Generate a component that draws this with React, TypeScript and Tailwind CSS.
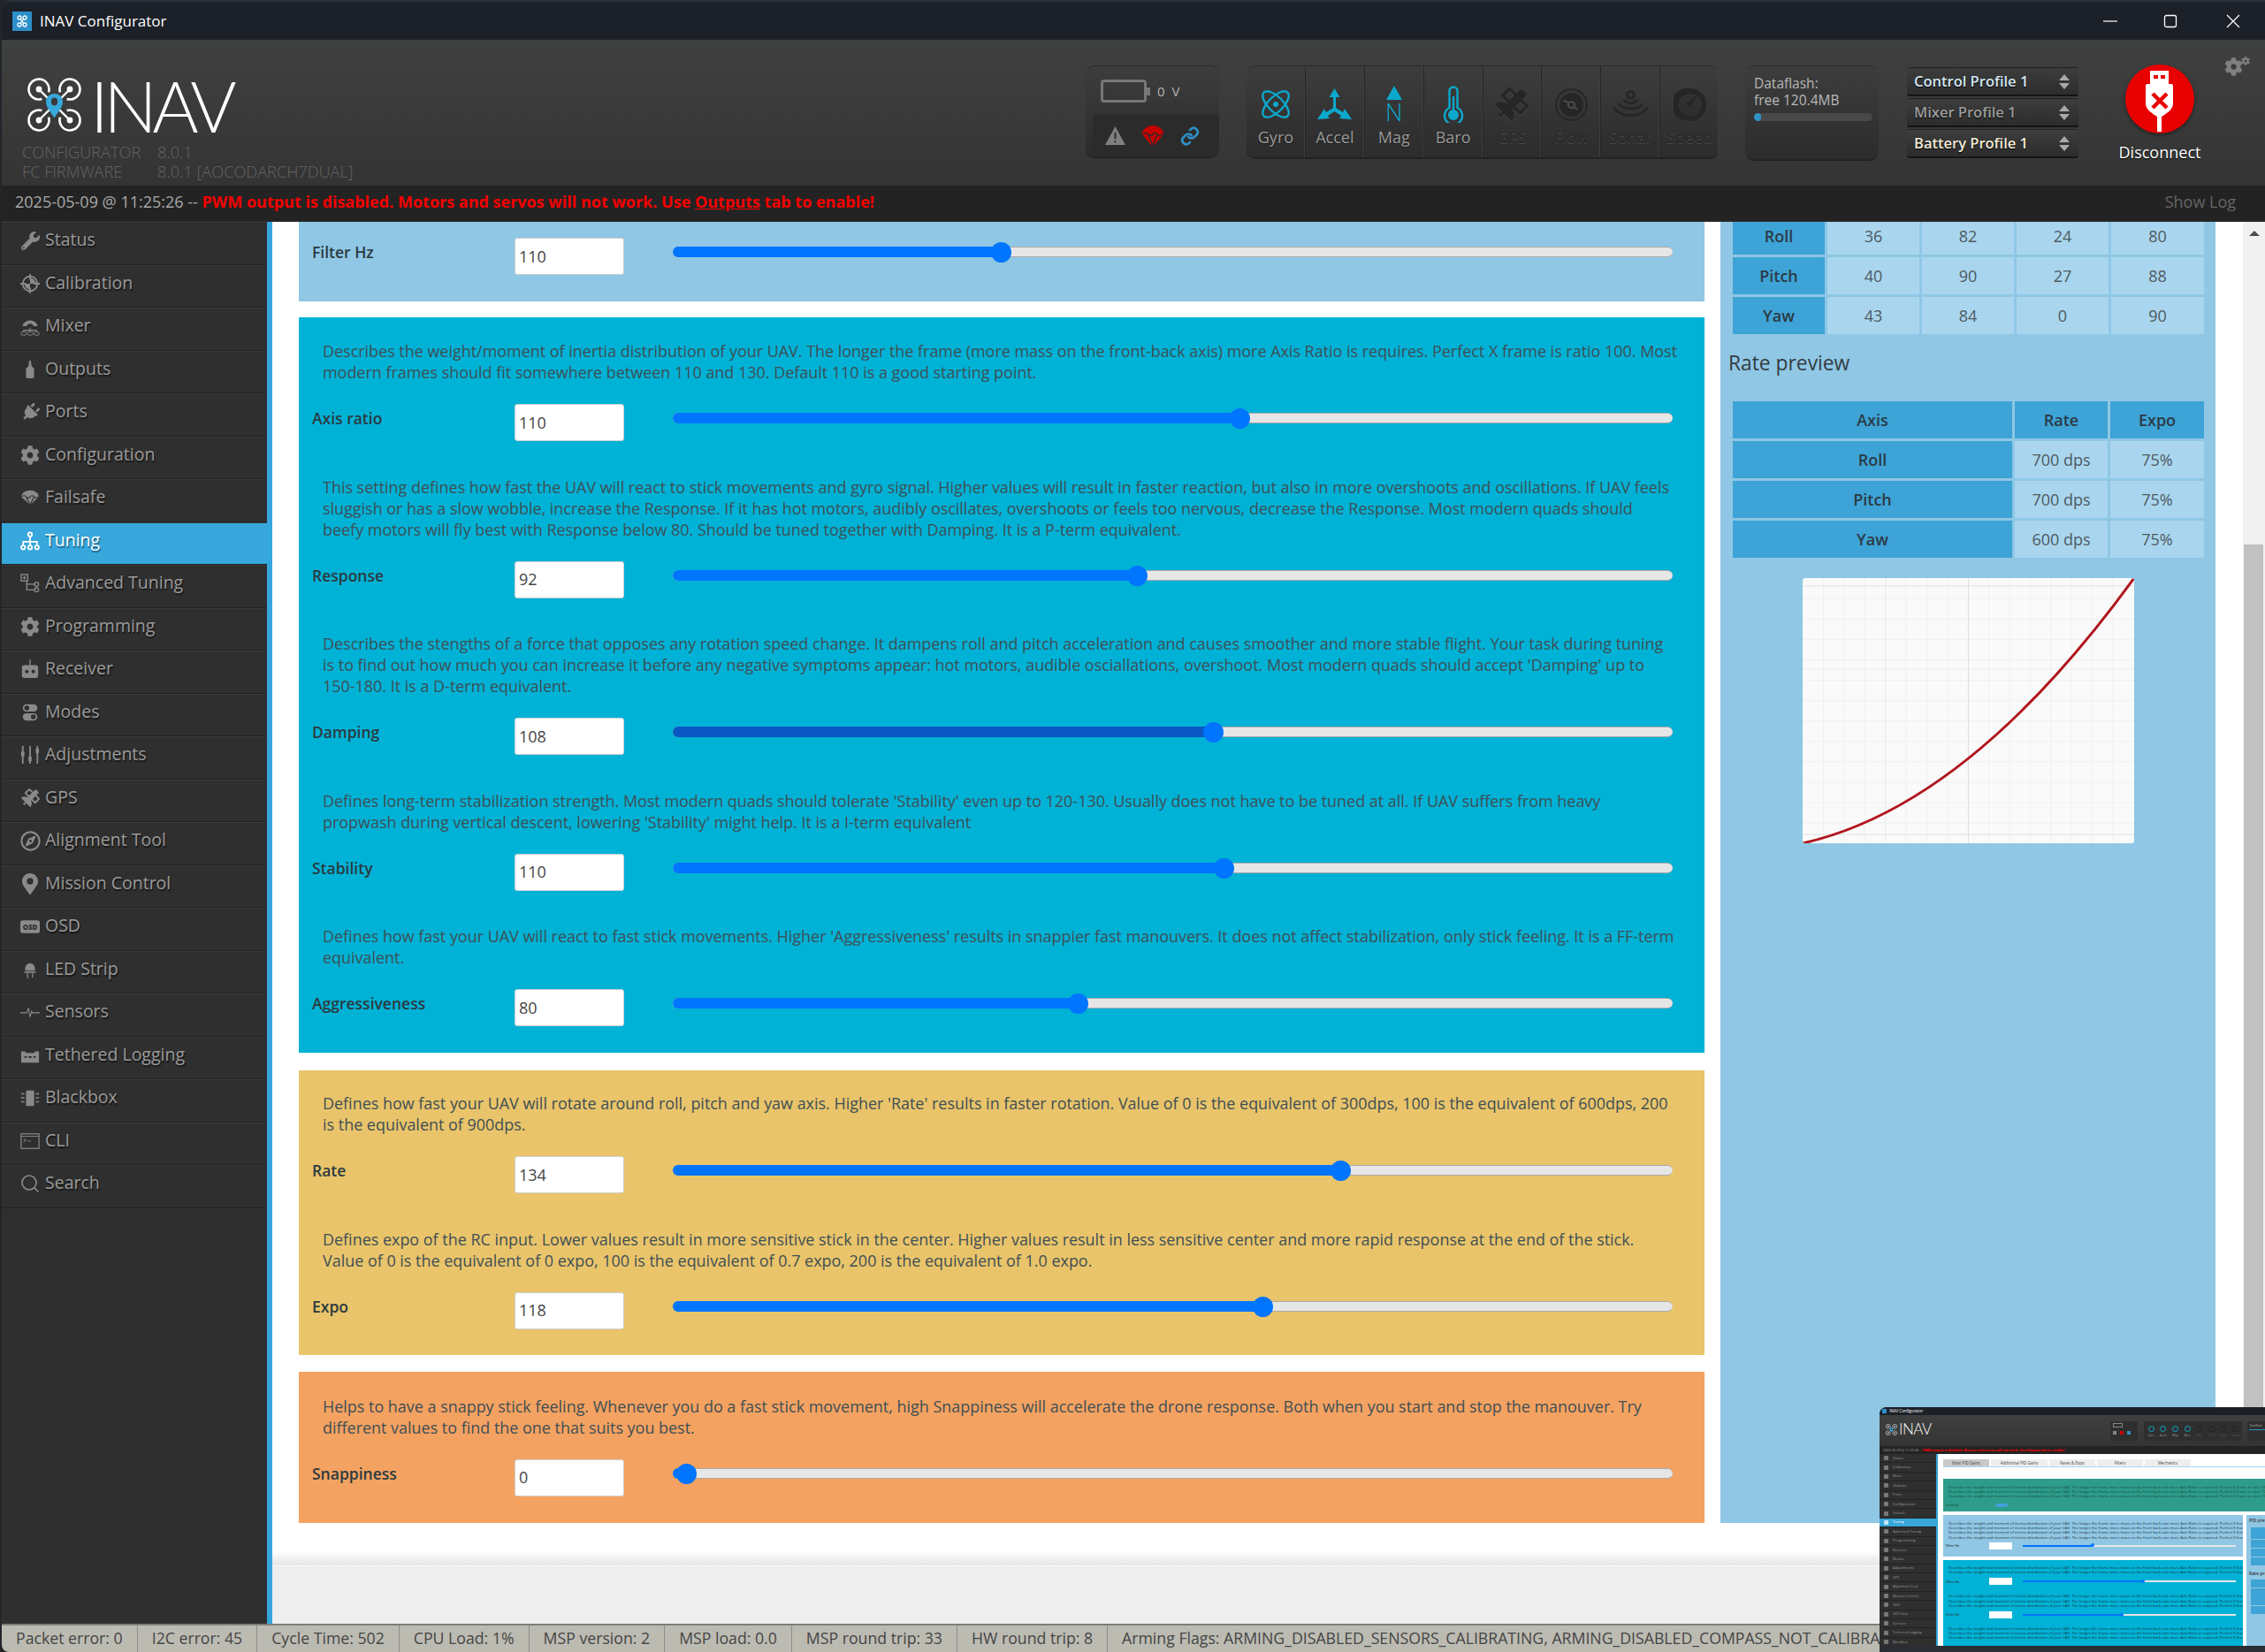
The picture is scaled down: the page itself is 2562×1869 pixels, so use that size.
import type { ReactNode } from "react";
import { FaWrench, FaCog, FaPlug, FaSatellite, FaRegCompass, FaMapMarkerAlt } from "react-icons/fa";
import { Search } from "lucide-react";

const openSans = "font-['Open_Sans','Liberation_Sans',sans-serif]";

function Svg({ children, className = "w-[22px] h-[22px]" }: { children: ReactNode; className?: string }) {
  return (
    <svg viewBox="0 0 24 24" fill="currentColor" className={className}>
      {children}
    </svg>
  );
}

const icons: Record<string, ReactNode> = {
  Status: <FaWrench className="w-[21px] h-[21px]" />,
  Calibration: (
    <Svg>
      <circle cx="12" cy="12" r="9" fill="none" stroke="currentColor" strokeWidth="2" />
      <path d="M12 0v7M12 17v7M0 12h7M17 12h7" stroke="currentColor" strokeWidth="2" />
      <path d="M12 5a7 7 0 0 1 7 7h-7zM12 19a7 7 0 0 1-7-7h7z" />
    </Svg>
  ),
  Mixer: (
    <Svg>
      <path d="M3 12a9 7 0 0 1 18 0h-5a4 3 0 0 0-8 0z" />
      <path d="M12 14v3M4 17h16M4 17v2M12 17v2M20 17v2" stroke="currentColor" strokeWidth="1.2" fill="none" />
      <rect x="1" y="19" width="6" height="4" rx="1" fill="none" stroke="currentColor" />
      <rect x="9" y="19" width="6" height="4" rx="1" fill="none" stroke="currentColor" />
      <rect x="17" y="19" width="6" height="4" rx="1" fill="none" stroke="currentColor" />
    </Svg>
  ),
  Outputs: (
    <Svg>
      <path d="M11 1h2l1 7 3 3v10a2 2 0 0 1-2 2H9a2 2 0 0 1-2-2V11l3-3z" />
    </Svg>
  ),
  Ports: <FaPlug className="w-[21px] h-[21px] rotate-45" />,
  Configuration: <FaCog className="w-[22px] h-[22px]" />,
  Failsafe: (
    <Svg>
      <path d="M1 11a11 8 0 0 1 22 0l-11 10z" />
      <path d="M1 11c3-2 5-2 6 0s4 2 5 0 4-2 5 0 4 1 6 0M7 11l5 10 5-10" stroke="#2f2f2f" strokeWidth="1.2" fill="none" />
    </Svg>
  ),
  Tuning: (
    <Svg>
      <g fill="none" stroke="currentColor" strokeWidth="2">
        <circle cx="12" cy="4" r="2.4" />
        <circle cx="3.5" cy="20" r="2.4" />
        <circle cx="12" cy="20" r="2.4" />
        <circle cx="20.5" cy="20" r="2.4" />
        <path d="M12 6.5v11M3.5 17.5V13h17v4.5" />
      </g>
    </Svg>
  ),
  "Advanced Tuning": (
    <Svg>
      <g fill="none" stroke="currentColor" strokeWidth="1.5">
        <rect x="1" y="1" width="8" height="8" />
        <path d="M3 5h4M5 3v4M8 9v11h10M8 13h10" />
        <circle cx="20" cy="13" r="2.5" />
        <circle cx="20" cy="20" r="2.5" />
      </g>
    </Svg>
  ),
  Programming: <FaCog className="w-[22px] h-[22px]" />,
  Receiver: (
    <Svg>
      <path d="M12 0v7" stroke="currentColor" strokeWidth="1.4" />
      <rect x="2" y="7" width="20" height="16" rx="3" />
      <circle cx="8" cy="15" r="2.3" fill="#2f2f2f" />
      <circle cx="16" cy="15" r="2.3" fill="#2f2f2f" />
    </Svg>
  ),
  Modes: (
    <Svg>
      <rect x="3" y="2" width="18" height="9" rx="4.5" />
      <circle cx="8" cy="6.5" r="3" fill="#2f2f2f" />
      <rect x="3" y="13" width="18" height="9" rx="4.5" />
      <circle cx="16" cy="17.5" r="3" fill="#2f2f2f" />
    </Svg>
  ),
  Adjustments: (
    <Svg>
      <path d="M3 1v22M12 1v22M21 1v22" stroke="currentColor" strokeWidth="2" />
      <rect x="1" y="8" width="4" height="6" rx="1" />
      <rect x="10" y="14" width="4" height="6" rx="1" />
      <rect x="19" y="4" width="4" height="6" rx="1" />
    </Svg>
  ),
  GPS: <FaSatellite className="w-[21px] h-[21px]" />,
  "Alignment Tool": <FaRegCompass className="w-[23px] h-[23px]" />,
  "Mission Control": <FaMapMarkerAlt className="w-[20px] h-[24px]" />,
  OSD: (
    <svg viewBox="0 0 24 16" className="w-[22px] h-[15px]">
      <rect width="24" height="16" rx="3" fill="currentColor" />
      <text x="12" y="11.5" textAnchor="middle" fontSize="8.5" fontWeight="800" fill="#2f2f2f" fontFamily="Open Sans">
        OSD
      </text>
    </svg>
  ),
  "LED Strip": (
    <Svg>
      <path d="M6 11a6 7 0 0 1 12 0v2H6z" />
      <rect x="5" y="14" width="14" height="2" />
      <path d="M9 16v7M15 16v6" stroke="currentColor" strokeWidth="1.4" />
    </Svg>
  ),
  Sensors: (
    <Svg>
      <path d="M0 13h8l2 -6 2 11 2-7 1 2h9" fill="none" stroke="currentColor" strokeWidth="1.2" />
    </Svg>
  ),
  "Tethered Logging": (
    <Svg>
      <path d="M1 7h5l1 2h10l1-2h5v14H1z" />
      <path d="M5 14h3M10 14h4M16 14h3" stroke="#2f2f2f" strokeWidth="2" />
    </Svg>
  ),
  Blackbox: (
    <Svg>
      <rect x="7" y="3" width="10" height="19" rx="1" />
      <path d="M1 7h4M1 12h4M1 17h4M19 7h4M19 12h4M19 17h4" stroke="currentColor" strokeWidth="1.6" />
    </Svg>
  ),
  CLI: (
    <Svg>
      <rect x="1" y="3" width="22" height="18" fill="none" stroke="currentColor" strokeWidth="1.3" />
      <path d="M1 6h22M4 9l3 2-3 2M9 12h4" fill="none" stroke="currentColor" strokeWidth="1" />
    </Svg>
  ),
  Search: <Search className="w-[24px] h-[24px]" strokeWidth={1.6} />,
};

const tabs = [
  "Status",
  "Calibration",
  "Mixer",
  "Outputs",
  "Ports",
  "Configuration",
  "Failsafe",
  "Tuning",
  "Advanced Tuning",
  "Programming",
  "Receiver",
  "Modes",
  "Adjustments",
  "GPS",
  "Alignment Tool",
  "Mission Control",
  "OSD",
  "LED Strip",
  "Sensors",
  "Tethered Logging",
  "Blackbox",
  "CLI",
  "Search",
];

function Logo({ className = "w-[61px] h-[61px]" }: { className?: string }) {
  const rotors = [
    [13, 13, 1, 1],
    [48, 13, -1, 1],
    [13, 48, 1, -1],
    [48, 48, -1, -1],
  ];
  return (
    <svg viewBox="0 0 61 61" className={className}>
      {rotors.map(([x, y, dx, dy]) => (
        <g key={`${x}-${y}`} fill="none" stroke="#fff">
          <path
            d={`M${x + dx * 11} ${y + dy * 3.4}A11.5 11.5 0 1 ${dx * dy > 0 ? 0 : 1} ${x + dx * 3.4} ${y + dy * 11}`}
            strokeWidth="2.6"
          />
          <circle cx={x} cy={y} r="3.4" fill="#fff" stroke="none" />
          <path d={`M${x} ${y}L${x + dx * 14} ${y + dy * 14}`} strokeWidth="2.4" />
        </g>
      ))}
      <path d="M30.5 18c5.5 0 9.5 4 9.5 9.5 0 6-6 12-9.5 18-3.5-6-9.5-12-9.5-18 0-5.5 4-9.5 9.5-9.5z" fill="#37a8db" />
      <ellipse cx="30.5" cy="27" rx="3.6" ry="4.4" fill="#383a39" />
    </svg>
  );
}

function Sensor({ label, on, children }: { label: string; on?: boolean; children: ReactNode }) {
  return (
    <div className="flex-1 flex flex-col items-center border-r border-[#262626] last:border-r-0 shadow-[inset_-1px_0_0_#3e3e3e]">
      <div className={`h-[56px] mt-[15px] flex items-center justify-center ${on ? "text-[#0ba8cc]" : "text-[#262626]"}`}>
        {children}
      </div>
      <span
        className={`text-[18px] leading-[24px] mt-[-3px] ${
          on ? "text-[#9a9a9a] [text-shadow:0_1px_1px_#111]" : "text-[#262626] [text-shadow:0_1px_0_#4d4d4d]"
        }`}
      >
        {label}
      </span>
    </div>
  );
}

function Profile({ label, color }: { label: string; color: string }) {
  return (
    <div className="h-[32px] w-[194px] flex items-center justify-between pl-[8px] pr-[10px] rounded-[3px] bg-linear-to-b from-[#3d3d3d] to-[#2c2c2c] border-b-2 border-[#141414] shadow-[0_-1px_0_#202020]">
      <span className={`text-[16.5px] font-semibold ${color} [text-shadow:0_1px_1px_#000]`}>{label}</span>
      <span className="flex flex-col gap-[3px]">
        <span className="w-0 h-0 border-x-[6px] border-x-transparent border-b-[7px] border-b-[#a9a9a9]" />
        <span className="w-0 h-0 border-x-[6px] border-x-transparent border-t-[7px] border-t-[#a9a9a9]" />
      </span>
    </div>
  );
}

function Header() {
  return (
    <div className="h-[165px] flex bg-linear-to-b from-[#3f4140] to-[#333433] relative">
      <div className="w-[1226px] shrink-0">
        <div className="flex items-center gap-[10px] pl-[29px] pt-[43px]">
          <Logo />
          <span className="text-[80px] leading-[60px] tracking-[-5.5px] font-['Lato','Open_Sans',sans-serif] font-light text-white">
            INAV
          </span>
        </div>
        <div className="pl-[23px] mt-[12px] text-[18.2px] leading-[22px] text-[#646464] font-light">
          <div className="flex">
            <span className="w-[153px]">CONFIGURATOR</span>
            <span>8.0.1</span>
          </div>
          <div className="flex">
            <span className="w-[153px]">FC FIRMWARE</span>
            <span>8.0.1 [AOCODARCH7DUAL]</span>
          </div>
        </div>
      </div>

      <div className="w-[151px] h-[104px] mt-[30px] rounded-[10px] bg-linear-to-b from-[#3d3d3d] to-[#2c2c2c] border-b-2 border-[#232323] shadow-[0_-1px_0_#2a2a2a] overflow-hidden flex flex-col">
        <div className="h-[55px] flex items-center pl-[17px] gap-[12px]">
          <div className="w-[52px] h-[26px] rounded-[4px] border-[3px] border-[#777] relative">
            <span className="absolute right-[-7px] top-[6px] w-[4px] h-[9px] bg-[#777]" />
          </div>
          <span className="text-[15px] tracking-[2px] text-[#b5b5b5] mt-[2px]">0 V</span>
        </div>
        <div className="flex-1 ml-[8px] bg-[#2b2b2b] flex items-center pl-[14px] gap-[19px]">
          <svg viewBox="0 0 24 22" className="w-[23px] h-[21px]">
            <path d="M12 0l12 22H0z" fill="#808080" />
            <path d="M12 7v8M12 17v2" stroke="#2b2b2b" strokeWidth="2" />
          </svg>
          <svg viewBox="0 0 24 24" className="w-[24px] h-[24px]">
            <path d="M0 10a12 10 0 0 1 24 0l-12 14z" fill="#c80000" />
            <path d="M1 10c3-2 4-2 6 0s4 2 5 0 4-2 5 0 4 1 6 0M7 10l5 13 5-13" stroke="#2b2b2b" strokeWidth="1.3" fill="none" />
          </svg>
          <svg viewBox="0 0 24 24" className="w-[22px] h-[22px]" fill="none" stroke="#2f8fc4" strokeWidth="3" strokeLinecap="round">
            <path d="M10 13a5 5 0 0 0 7.5 0l3-3a5 5 0 0 0-7-7L12 4.500" />
            <path d="M14 11a5 5 0 0 0-7.5 0l-3 3a5 5 0 0 0 7 7l1.500-1.500" />
          </svg>
        </div>
      </div>

      <div className="w-[534px] h-[105px] ml-[31px] mt-[30px] flex rounded-[10px] bg-linear-to-b from-[#3d3d3d] to-[#2c2c2c] border-b-2 border-[#232323] shadow-[0_-1px_0_#2a2a2a] overflow-hidden">
        <Sensor label="Gyro" on>
          <svg viewBox="0 0 36 36" className="w-[36px] h-[36px]" fill="none" stroke="currentColor" strokeWidth="2.4">
            <ellipse cx="18" cy="18" rx="8.5" ry="19" transform="rotate(45 18 18)" />
            <ellipse cx="18" cy="18" rx="8.5" ry="19" transform="rotate(-45 18 18)" />
            <circle cx="18" cy="18" r="3" fill="currentColor" stroke="none" />
          </svg>
        </Sensor>
        <Sensor label="Accel" on>
          <svg viewBox="0 0 40 36" className="w-[41px] h-[36px]" fill="currentColor">
            <path d="M20 0l6 10h-4.5v12l8 5 2-4 8 12-14-1 2-3-7.5-5-7.5 5 2 3-14 1 8-12 2 4 8-5V10H14z" />
          </svg>
        </Sensor>
        <Sensor label="Mag" on>
          <div className="flex flex-col items-center">
            <span className="w-0 h-0 border-x-[9px] border-x-transparent border-b-[16px] border-b-current" />
            <span className="text-[27px] leading-[26px] mt-[1px] font-light">N</span>
          </div>
        </Sensor>
        <Sensor label="Baro" on>
          <svg viewBox="0 0 24 42" className="w-[24px] h-[42px]" fill="none" stroke="currentColor" strokeWidth="2.4">
            <path d="M7.5 25V6a4.500 4.500 0 0 1 9 0v19a10 10 0 1 1-9 0z" />
            <circle cx="12" cy="33" r="6" fill="currentColor" stroke="none" />
            <path d="M12 12v18" />
          </svg>
        </Sensor>
        <Sensor label="GPS">
          <FaSatellite className="w-[38px] h-[38px] [filter:drop-shadow(0_1px_0_#4a4a4a)]" />
        </Sensor>
        <Sensor label="Flow">
          <svg viewBox="0 0 36 36" className="w-[37px] h-[37px]" fill="none" stroke="currentColor" strokeWidth="2">
            <circle cx="18" cy="18" r="17" />
            <circle cx="18" cy="18" r="12" fill="currentColor" />
            <circle cx="18" cy="18" r="3.5" stroke="#4a4a4a" />
            <path d="M9 13l6 3M21 21l4 2" stroke="#4a4a4a" />
          </svg>
        </Sensor>
        <Sensor label="Sonar">
          <svg viewBox="0 0 44 36" className="w-[43px] h-[36px]" fill="none" stroke="currentColor" strokeWidth="3">
            <circle cx="22" cy="7" r="4" />
            <path d="M14 13c3 5 13 5 16 0M8 17c5 8 23 8 28 0M2 21c7 13 33 13 40 0" />
          </svg>
        </Sensor>
        <Sensor label="Speed">
          <svg viewBox="0 0 36 36" className="w-[37px] h-[37px]" fill="currentColor">
            <path d="M18 0a18 18 0 1 1-8 34l2-6a12 12 0 1 0 6-22 12 12 0 0 0-5 23l-3 6A18 18 0 0 1 18 0z" />
            <path d="M28 6L18 20l-4-3z" />
            <circle cx="18" cy="18" r="11" fillOpacity="0.4" />
          </svg>
        </Sensor>
      </div>

      <div className="w-[151px] h-[107px] ml-[30px] mt-[30px] pl-[10px] pr-[7px] pt-[10px] rounded-[10px] bg-linear-to-b from-[#3d3d3d] to-[#2c2c2c] border-b-2 border-[#232323] shadow-[0_-1px_0_#2a2a2a]">
        <div className="text-[15.5px] leading-[19px] text-[#b8b8b8]">Dataflash:</div>
        <div className="text-[15.5px] leading-[19px] text-[#b8b8b8]">free 120.4MB</div>
        <div className="mt-[5px] h-[9px] rounded-full bg-[#484848] overflow-hidden">
          <div className="w-[8px] h-[9px] rounded-full bg-[#2d93c9]" />
        </div>
      </div>

      <div className="ml-[32px] mt-[32px] flex flex-col gap-[3px]">
        <Profile label="Control Profile 1" color="text-[#d5e8f5]" />
        <Profile label="Mixer Profile 1" color="text-[#9d9d9d]" />
        <Profile label="Battery Profile 1" color="text-[#f2ecd8]" />
      </div>

      <div className="ml-[42px] mt-[28px] w-[100px] flex flex-col items-center">
        <svg viewBox="0 0 78 78" className="w-[78px] h-[78px] drop-shadow-[0_2px_2px_#222]">
          <circle cx="39" cy="39" r="39" fill="#e80000" />
          <path d="M28 7h21v15h3a2 2 0 0 1 2 2v20c0 7-7 11-13 15v17h-5V59c-6-4-13-8-13-15V24a2 2 0 0 1 2-2h3z" fill="#fff" />
          <path d="M32 12h5v4h-5zM40 12h5v4h-5z" fill="#e80000" />
          <path d="M31 33l16 16M47 33L31 49" stroke="#e80000" strokeWidth="4.5" />
        </svg>
        <span className="text-[18px] leading-[24px] mt-[9px] text-white [text-shadow:0_1px_1px_#000]">Disconnect</span>
      </div>
      <FaCog className="absolute right-[25px] top-[20px] w-[21px] h-[21px] text-[#808080]" />
      <FaCog className="absolute right-[17px] top-[19px] w-[10px] h-[10px] text-[#808080]" />
    </div>
  );
}

function Slider({ at, dark }: { at: number; dark?: boolean }) {
  return (
    <div className="relative h-[12px] w-[1131px] mb-[10px] rounded-full bg-[#e6e6e6] border-y border-[#a9a9a9] flex">
      <div className={`h-[12px] -my-px rounded-l-full ${dark ? "bg-[#0a58c4]" : "bg-[#0075ff]"}`} style={{ width: at }} />
      <div className="absolute top-[-6px] w-[23px] h-[23px] rounded-full bg-[#0075ff]" style={{ left: at - 11 }} />
    </div>
  );
}

function Row({ label, value, at, dark }: { label: string; value: string; at: number; dark?: boolean }) {
  return (
    <div className="flex items-center h-[42px] pl-[15px]">
      <span className="w-[229px] text-[17.5px] font-semibold text-[#2b3a40] mb-[10px] leading-[24px]">{label}</span>
      <div className="w-[124px] h-[42px] rounded-[3px] bg-white border border-[#cfcfcf] flex items-center pl-[4px] text-[18px] text-[#444]">
        {value}
      </div>
      <div className="ml-[55px]">
        <Slider at={at} dark={dark} />
      </div>
    </div>
  );
}

function Desc({ lines }: { lines: string[] }) {
  return (
    <div className="pl-[27px] mb-[24px] text-[17.96px] leading-[24px] text-[#3f4f55]">
      {lines.map((l) => (
        <div key={l} className="whitespace-nowrap">
          {l}
        </div>
      ))}
    </div>
  );
}

function Cell({ children, head, className = "" }: { children: ReactNode; head?: boolean; className?: string }) {
  return (
    <div
      className={`flex items-center justify-center h-[42px] text-[18px] ${
        head ? "bg-[#3ea3d6] font-semibold text-[#2b3a45]" : "bg-[#a9d6ee] text-[#4d5a62]"
      } ${className}`}
    >
      {children}
    </div>
  );
}

function Chart() {
  const minorX = Array.from({ length: 15 }, (_, i) => (i + 1) * 23.4);
  const minorY = Array.from({ length: 12 }, (_, i) => (i + 1) * 23.1);
  return (
    <svg viewBox="0 0 375 300" className="w-[375px] h-[300px] rounded-[3px] bg-[#fafafa]">
      {minorX.map((x) => (
        <path key={x} d={`M${x} 0V300`} stroke="#f0f0f0" />
      ))}
      {minorY.map((y) => (
        <path key={y} d={`M0 ${y}H375`} stroke="#f0f0f0" />
      ))}
      <path d="M94 0V300M0 103H375" stroke="#ececec" />
      <path d="M0 9H375M0 290H375M187.5 0V300" stroke="#e0e0e0" />
      <path d="M0 300Q187.5 258 375 0" fill="none" stroke="#b0161d" strokeWidth="3" />
    </svg>
  );
}

function MiniLines({ n, className = "" }: { n: number; className?: string }) {
  const t =
    "Describes the weight and moment of inertia distribution of your UAV. The longer the frame more mass on the front back axis more Axis Ratio is required. Perfect X frame is ratio 100. Most modern frames should fit somewhere between 110 and 130 and a good starting point is 110 for all quads flying today";
  return (
    <div className={`pl-[6px] text-[4.3px] leading-[5.2px] text-[#1f3036] ${className}`}>
      {Array.from({ length: n }, (_, i) => (
        <div key={i} className="whitespace-nowrap overflow-hidden">
          {t}
        </div>
      ))}
    </div>
  );
}

function MiniSlider({ w }: { w: number }) {
  return (
    <div className="flex items-center h-[10px] pl-[3px]">
      <span className="w-[49px] text-[3.8px] text-[#2b3a40] font-semibold">Filter Hz</span>
      <span className="w-[26px] h-[8px] bg-white" />
      <div className="ml-[12px] w-[241px] h-[2px] bg-[#e6e6e6] relative">
        <div className="h-[2px] bg-[#0075ff]" style={{ width: w }} />
        <div className="absolute top-[-1.5px] w-[4px] h-[4px] rounded-full bg-[#0075ff]" style={{ left: w - 2 }} />
      </div>
    </div>
  );
}

function Mini() {
  return (
    <div className="absolute right-0 bottom-0 w-[436px] h-[277px] rounded-tl-[8px] overflow-hidden bg-[#2a2e33] flex flex-col">
      <div className="h-[9px] bg-[#1c2027] flex items-center pl-[3px] text-[4.5px] text-white">
        <span className="w-[5px] h-[5px] bg-[#2d8fc9] mr-[3px]" />
        INAV Configurator
      </div>
      <div className="h-[35px] bg-linear-to-b from-[#3f4140] to-[#333433] flex items-start">
        <div className="w-[261px] shrink-0 pl-[7px] pt-[9px] flex items-center gap-[2px]">
          <Logo className="w-[13px] h-[13px]" />
          <span className="text-[17px] leading-[14px] tracking-[-0.5px] font-light font-['Lato',sans-serif] text-white">INAV</span>
        </div>
        <div className="w-[32px] h-[22px] mt-[7px] rounded-[2px] bg-[#2f2f2f] flex flex-col px-[3px] pt-[2px]">
          <span className="w-[11px] h-[5px] border border-[#888]" />
          <span className="flex gap-[4px] mt-[4px]">
            <span className="w-[4px] h-[4px] bg-[#888]" />
            <span className="w-[4px] h-[4px] bg-[#c80000]" />
            <span className="w-[4px] h-[4px] bg-[#2f8fc4]" />
          </span>
        </div>
        <div className="w-[114px] h-[22px] ml-[7px] mt-[7px] rounded-[2px] bg-[#2f2f2f] grid grid-cols-8 justify-items-center items-center px-[1px]">
          {["Gyro", "Accel", "Mag", "Baro", "GPS", "Flow", "Sonar", "Speed"].map((s, i) => (
            <div key={s} className="flex flex-col items-center gap-[2px]">
              <span className={`w-[7px] h-[7px] rounded-full border ${i < 4 ? "border-[#0ba8cc]" : "border-[#222]"}`} />
              <span className={`text-[3.2px] leading-[4px] ${i < 4 ? "text-[#999]" : "text-[#555]"}`}>{s}</span>
            </div>
          ))}
        </div>
        <div className="w-[20px] h-[22px] ml-[6px] mt-[7px] rounded-l-[2px] bg-[#2f2f2f] pl-[2px] pt-[3px] text-[3.2px] leading-[4px] text-[#aaa]">
          <div>Dataflash</div>
          <div className="mt-[2px] h-[1px] bg-[#2d93c9]" />
        </div>
      </div>
      <div className="h-[9px] bg-[#232323] flex items-center pl-[4px] text-[3.8px] whitespace-nowrap">
        <span className="text-[#aaa]">2025-05-09 @ 11:25:26 --&nbsp;</span>
        <span className="text-[#f00] font-bold">PWM output is disabled. Motors and servos will not work. Use Outputs tab to enable!</span>
      </div>
      <div className="h-[217px] flex">
        <div className="w-[64px] bg-[#2f2f2f] border-r-2 border-[#35a7dc] shrink-0 box-content overflow-hidden">
          {tabs.map((t) => (
            <div
              key={t}
              className={`h-[10.4px] pl-[5px] flex items-center text-[4px] border-b border-[#222] ${
                t === "Tuning" ? "bg-[#37a7dc] text-white" : "text-[#999]"
              }`}
            >
              <span className="w-[5px] h-[5px] mr-[5px] rounded-[1px] bg-current opacity-70" />
              {t}
            </div>
          ))}
        </div>
        <div className="flex-1 bg-white overflow-hidden pl-[6px]">
          <div className="flex gap-[2px] mt-[6px] w-[400px] border-b border-[#a9d6ee] text-[4.5px] text-[#444]">
            <span className="w-[52px] h-[8px] bg-[#c9c9c9] flex items-center justify-center">Main PID Gains</span>
            <span className="w-[64px] h-[8px] bg-[#eee] flex items-center justify-center">Additional PID Gains</span>
            <span className="w-[52px] h-[8px] bg-[#eee] flex items-center justify-center">Rates & Expo</span>
            <span className="w-[52px] h-[8px] bg-[#eee] flex items-center justify-center">Filters</span>
            <span className="w-[52px] h-[8px] bg-[#eee] flex items-center justify-center">Mechanics</span>
          </div>
          <div className="h-[37px] mt-[13px] w-[400px] bg-[#2d9c8a] pt-[7px]">
            <MiniLines n={3} className="text-[#17483f]" />
            <div className="flex items-center h-[9px] pl-[3px] mt-[3px] text-[3.8px] text-[#17483f]">
              <span className="w-[56px]">Enabled</span>
              <span className="w-[14px] h-[4px] rounded-full bg-[#3ea3d6]" />
            </div>
          </div>
          <div className="flex gap-[4px] mt-[4px] w-[400px]">
            <div className="w-[339px] shrink-0">
              <div className="h-[47px] bg-[#8fc7e5] pt-[7px] overflow-hidden">
                <MiniLines n={4} />
                <div className="mt-[2px]">
                  <MiniSlider w={79} />
                </div>
              </div>
              <div className="h-[100px] mt-[4px] bg-[#00b2d6] pt-[6px] overflow-hidden">
                <MiniLines n={2} />
                <div className="mt-[3px]">
                  <MiniSlider w={136} />
                </div>
                <MiniLines n={3} className="mt-[9px]" />
                <div className="mt-[3px]">
                  <MiniSlider w={112} />
                </div>
                <MiniLines n={3} className="mt-[8px]" />
              </div>
            </div>
            <div className="flex-1 bg-[#8fc7e5] pl-[3px] pt-[3px]">
              <div className="text-[5px] font-semibold text-[#333]">PID preview</div>
              <div className="mt-[3px] ml-[2px] h-[13px] bg-[#3ea3d6]" />
              <div className="mt-[1px] ml-[2px] h-[9px] bg-[#3ea3d6]" />
              <div className="mt-[1px] ml-[2px] h-[9px] bg-[#3ea3d6]" />
              <div className="mt-[1px] ml-[2px] h-[9px] bg-[#3ea3d6]" />
              <div className="mt-[6px] text-[5px] font-semibold text-[#333]">Rate preview</div>
              <div className="mt-[3px] ml-[2px] h-[9px] bg-[#3ea3d6]" />
              <div className="mt-[1px] ml-[2px] h-[19px] bg-[#3ea3d6]" />
              <div className="mt-[1px] ml-[2px] h-[9px] bg-[#3ea3d6]" />
            </div>
          </div>
        </div>
      </div>
    </div>
  );
}

const status = [
  "Packet error: 0",
  "I2C error: 45",
  "Cycle Time: 502",
  "CPU Load: 1%",
  "MSP version: 2",
  "MSP load: 0.0",
  "MSP round trip: 33",
  "HW round trip: 8",
  "Arming Flags: ARMING_DISABLED_SENSORS_CALIBRATING, ARMING_DISABLED_COMPASS_NOT_CALIBRATED",
];

export default function App() {
  return (
    <div className={`relative w-[2562px] h-[1869px] overflow-hidden bg-[#22262b] pl-[2px] flex flex-col ${openSans}`}>
      {/* title bar */}
      <div className="h-[45px] shrink-0 rounded-tl-[10px] bg-[#1c2028] border-t-2 border-[#2b3038] flex items-center pl-[12px] text-white">
        <span className="w-[22px] h-[22px] bg-[#2d8fc9] flex items-center justify-center">
          <svg viewBox="0 0 16 16" className="w-[16px] h-[16px]" fill="none" stroke="#fff" strokeWidth="1.3">
            <circle cx="5" cy="4" r="2" />
            <circle cx="11" cy="4" r="2" />
            <circle cx="5" cy="12" r="2" />
            <circle cx="11" cy="12" r="2" />
            <path d="M6 5l4 6M10 5l-4 6" />
          </svg>
        </span>
        <span className="ml-[9px] text-[17px]">INAV Configurator</span>
        <div className="ml-auto flex items-center text-white">
          <svg viewBox="0 0 16 16" className="w-[16px] h-[16px] mr-[52px]" stroke="#fff" strokeWidth="1.2">
            <path d="M0 8H16" />
          </svg>
          <svg viewBox="0 0 16 16" className="w-[16px] h-[16px] mr-[55px]" fill="none" stroke="#fff" strokeWidth="1.3">
            <rect x="1.5" y="1.5" width="13" height="13" rx="2" />
          </svg>
          <svg viewBox="0 0 16 16" className="w-[16px] h-[16px] mr-[28px]" stroke="#fff" strokeWidth="1.2">
            <path d="M1 1L15 15M15 1L1 15" />
          </svg>
        </div>
      </div>

      <Header />

      {/* log line */}
      <div className="h-[41px] shrink-0 bg-[#232323] flex items-center justify-between pl-[15px] pr-[33px] pb-[3px] text-[18px] border-b border-[#2e2e2e]">
        <div className="whitespace-nowrap">
          <span className="text-[#a8a8a8]">2025-05-09 @ 11:25:26 -- </span>
          <span className="text-[#f40000] font-bold">
            PWM output is disabled. Motors and servos will not work. Use <u>Outputs</u> tab to enable!
          </span>
        </div>
        <span className="text-[#666]">Show Log</span>
      </div>

      <div className="h-[1586px] shrink-0 flex">
        {/* tabs */}
        <nav className="w-[306px] shrink-0 bg-[#2f2f2f] border-r-[6px] border-[#35a7dc]">
          {tabs.map((t) => (
            <div
              key={t}
              className={`h-[48.5px] pl-[17px] flex border-b border-[#222] shadow-[inset_0_1px_0_#3a3a3a] ${
                t === "Tuning" ? "bg-[#37a7dc] text-white" : "text-[#8a8a8a]"
              }`}
            >
              <span className="w-[30px] h-[42px] flex items-center justify-center shrink-0">{icons[t]}</span>
              <span
                className={`ml-[2px] text-[19.5px] leading-[40px] ${
                  t === "Tuning" ? "[text-shadow:1px_2px_1px_#1d5e80]" : "text-[#9a9a9a] [text-shadow:1px_2px_1px_#161616]"
                }`}
              >
                {t}
              </span>
            </div>
          ))}
        </nav>

        <div className="flex-1 flex flex-col min-w-0">
          <div className="relative h-[1520px] shrink-0 bg-white flex overflow-hidden">
            <div className="w-[2229px] shrink-0 pl-[30px] flex gap-[18px]">
              <div className="w-[1590px] shrink-0">
                <div className="bg-[#8fc7e5] pt-[18px] pb-[30px]">
                  <Row label="Filter Hz" value="110" at={371} />
                </div>
                <div className="mt-[18px] bg-[#00b2d6] pt-[26px] pb-[30px]">
                  <Desc
                    lines={[
                      "Describes the weight/moment of inertia distribution of your UAV. The longer the frame (more mass on the front-back axis) more Axis Ratio is requires. Perfect X frame is ratio 100. Most",
                      "modern frames should fit somewhere between 110 and 130. Default 110 is a good starting point.",
                    ]}
                  />
                  <Row label="Axis ratio" value="110" at={641} />
                  <div className="h-[39.5px]" />
                  <Desc
                    lines={[
                      "This setting defines how fast the UAV will react to stick movements and gyro signal. Higher values will result in faster reaction, but also in more overshoots and oscillations. If UAV feels",
                      "sluggish or has a slow wobble, increase the Response. If it has hot motors, audibly oscillates, overshoots or feels too nervous, decrease the Response. Most modern quads should",
                      "beefy motors will fly best with Response below 80. Should be tuned together with Damping. It is a P-term equivalent.",
                    ]}
                  />
                  <Row label="Response" value="92" at={525} />
                  <div className="h-[39.5px]" />
                  <Desc
                    lines={[
                      "Describes the stengths of a force that opposes any rotation speed change. It dampens roll and pitch acceleration and causes smoother and more stable flight. Your task during tuning",
                      "is to find out how much you can increase it before any negative symptoms appear: hot motors, audible osciallations, overshoot. Most modern quads should accept 'Damping' up to",
                      "150-180. It is a D-term equivalent.",
                    ]}
                  />
                  <Row label="Damping" value="108" at={611} dark />
                  <div className="h-[39.5px]" />
                  <Desc
                    lines={[
                      "Defines long-term stabilization strength. Most modern quads should tolerate 'Stability' even up to 120-130. Usually does not have to be tuned at all. If UAV suffers from heavy",
                      "propwash during vertical descent, lowering 'Stability' might help. It is a I-term equivalent",
                    ]}
                  />
                  <Row label="Stability" value="110" at={623} />
                  <div className="h-[39.5px]" />
                  <Desc
                    lines={[
                      "Defines how fast your UAV will react to fast stick movements. Higher 'Aggressiveness' results in snappier fast manouvers. It does not affect stabilization, only stick feeling. It is a FF-term",
                      "equivalent.",
                    ]}
                  />
                  <Row label="Aggressiveness" value="80" at={458} />
                </div>
                <div className="mt-[20px] bg-[#e9c46a] pt-[25px] pb-[29px]">
                  <Desc
                    lines={[
                      "Defines how fast your UAV will rotate around roll, pitch and yaw axis. Higher 'Rate' results in faster rotation. Value of 0 is the equivalent of 300dps, 100 is the equivalent of 600dps, 200",
                      "is the equivalent of 900dps.",
                    ]}
                  />
                  <Row label="Rate" value="134" at={755} />
                  <div className="h-[39.5px]" />
                  <Desc
                    lines={[
                      "Defines expo of the RC input. Lower values result in more sensitive stick in the center. Higher values result in less sensitive center and more rapid response at the end of the stick.",
                      "Value of 0 is the equivalent of 0 expo, 100 is the equivalent of 0.7 expo, 200 is the equivalent of 1.0 expo.",
                    ]}
                  />
                  <Row label="Expo" value="118" at={667} />
                </div>
                <div className="mt-[19px] bg-[#f4a261] pt-[27px] pb-[30px]">
                  <Desc
                    lines={[
                      "Helps to have a snappy stick feeling. Whenever you do a fast stick movement, high Snappiness will accelerate the drone response. Both when you start and stop the manouver. Try",
                      "different values to find the one that suits you best.",
                    ]}
                  />
                  <Row label="Snappiness" value="0" at={15} />
                </div>
              </div>

              <div className="w-[560px] shrink-0 h-[1472px] bg-[#8fc7e5] overflow-hidden">
                <div className="ml-[14px] w-[533px] -mt-[5px] grid grid-cols-[104px_104px_104px_104px_105px] gap-[3px]">
                  {[
                    ["Roll", "36", "82", "24", "80"],
                    ["Pitch", "40", "90", "27", "88"],
                    ["Yaw", "43", "84", "0", "90"],
                  ].map((r) =>
                    r.map((c, i) => (
                      <Cell key={r[0] + i} head={i === 0}>
                        {c}
                      </Cell>
                    ))
                  )}
                </div>
                <h2 className="ml-[9px] mt-[16px] text-[22.8px] leading-[33px] font-medium text-[#333c42]">Rate preview</h2>
                <div className="ml-[14px] mt-[27px] w-[533px] grid grid-cols-[316px_105px_106px] gap-[3px]">
                  {[
                    ["Axis", "Rate", "Expo"],
                    ["Roll", "700 dps", "75%"],
                    ["Pitch", "700 dps", "75%"],
                    ["Yaw", "600 dps", "75%"],
                  ].map((r, ri) =>
                    r.map((c, i) => (
                      <Cell key={r[0] + i} head={ri === 0 || i === 0}>
                        {c}
                      </Cell>
                    ))
                  )}
                </div>
                <div className="ml-[93px] mt-[23px]">
                  <Chart />
                </div>
              </div>
            </div>
            <div className="flex-1" />
            {/* scrollbar */}
            <div className="w-[25px] shrink-0 bg-[#f1f1f1] flex flex-col items-center relative">
              <span className="mt-[10px] w-0 h-0 border-x-[6px] border-x-transparent border-b-[6px] border-b-[#505050]" />
              <div className="absolute left-[1px] right-[2px] top-[365px] bottom-0 bg-[#c1c1c1]" />
            </div>
            <div className="absolute left-0 right-0 bottom-0 h-[16px] bg-linear-to-b from-white/0 to-[#e4e4e4]" />
          </div>
          <div className="flex-1 bg-[#eeeeee] border-t border-white" />
        </div>
      </div>

      {/* status bar */}
      <div className="flex-1 rounded-bl-[8px] bg-[#bcbbb2] border-t-2 border-[#7f7f7a] flex items-center text-[17.7px] text-[#454545] whitespace-nowrap overflow-hidden">
        {status.map((s) => (
          <span key={s} className="h-full px-[16px] pb-[1px] flex items-center border-r border-[#8d8d86] last:border-r-0">
            {s}
          </span>
        ))}
      </div>

      <Mini />
    </div>
  );
}
